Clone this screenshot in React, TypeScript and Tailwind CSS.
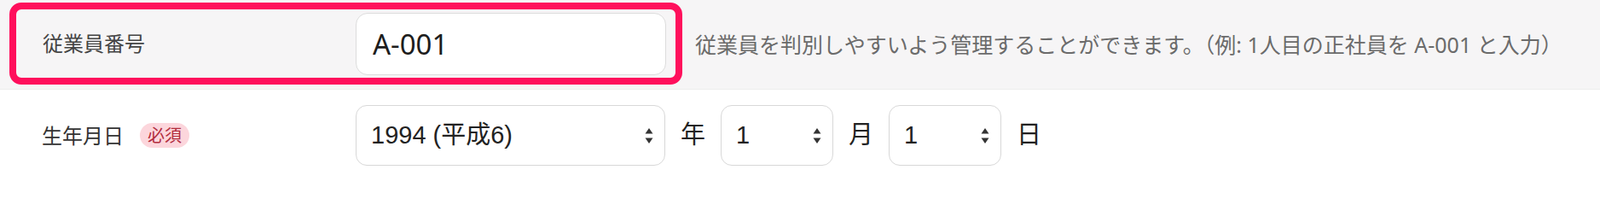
import React from 'react';

const jp = "font-['Noto_Sans','Noto_Sans_CJK_JP',sans-serif]";
const mac = "font-['Liberation_Sans','Noto_Sans_CJK_JP',sans-serif]";

const Chevrons: React.FC = () => (
  <svg
    className="pointer-events-none absolute right-[14px] top-1/2 -translate-y-1/2"
    width="10"
    height="20"
    viewBox="0 0 10 20"
  >
    <path d="M5 1 L9.5 7.5 H0.5 Z" fill="#333" />
    <path d="M5 19 L9.5 12.5 H0.5 Z" fill="#333" />
  </svg>
);

interface DateSelectProps {
  value: string;
  options: string[];
  width: string;
}

const DateSelect: React.FC<DateSelectProps> = ({ value, options, width }) => (
  <div className={`relative ${width}`}>
    <select
      defaultValue={value}
      className={`h-[71px] w-full appearance-none rounded-[13px] border border-[#d8d8d8] bg-white pl-[17px] pr-10 text-[29px] text-[#222] outline-none ${mac}`}
    >
      {options.map((o) => (
        <option key={o} value={o}>
          {o}
        </option>
      ))}
    </select>
    <Chevrons />
  </div>
);

const App: React.FC = () => {
  const years = ['1993 (平成5)', '1994 (平成6)', '1995 (平成7)'];
  const months = Array.from({ length: 12 }, (_, i) => String(i + 1));
  const days = Array.from({ length: 31 }, (_, i) => String(i + 1));

  return (
    <div className="h-[215px] w-[1876px] bg-white">
      {/* 従業員番号 */}
      <div className="flex h-[105px] items-start border-b border-[#ededed] bg-[#f6f5f6]">
        <div className="ml-[11px] mt-[3px] flex h-[96px] w-[789px] items-center rounded-[14px] border-8 border-[#ff0f5c] pl-[31px]">
          <label className={`w-[367px] text-[24px] text-[#444] ${jp}`}>従業員番号</label>
          <input
            readOnly
            value="A-001"
            className={`h-[73px] w-[364px] rounded-[14px] border border-[#dcdcdc] bg-white pl-[19px] text-[33px] text-[#1d1d1d] outline-none ${jp}`}
          />
        </div>
        <p className={`ml-[15px] mt-[35px] text-[25px] leading-[34px] text-[#6b6b6b] ${jp}`}>
          従業員を判別しやすいよう管理することができます。（例: 1人目の正社員を A-001 と入力）
        </p>
      </div>

      {/* 生年月日 */}
      <div className="flex h-[110px] items-center pb-[3px]">
        <div className="flex w-[417px] items-center pl-[49px]">
          <span className={`text-[24px] text-[#333] ${jp}`}>生年月日</span>
          <span
            className={`ml-[19px] flex h-[29px] items-center rounded-full bg-[#fcd6dc] px-[9px] text-[20px] text-[#b22d3d] ${jp}`}
          >
            必須
          </span>
        </div>
        <div className={`flex items-center gap-[18px] text-[29px] text-[#222] ${mac}`}>
          <DateSelect value="1994 (平成6)" options={years} width="w-[363px]" />
          <span>年</span>
          <DateSelect value="1" options={months} width="w-[132px]" />
          <span>月</span>
          <DateSelect value="1" options={days} width="w-[132px]" />
          <span>日</span>
        </div>
      </div>
    </div>
  );
};

export default App;
